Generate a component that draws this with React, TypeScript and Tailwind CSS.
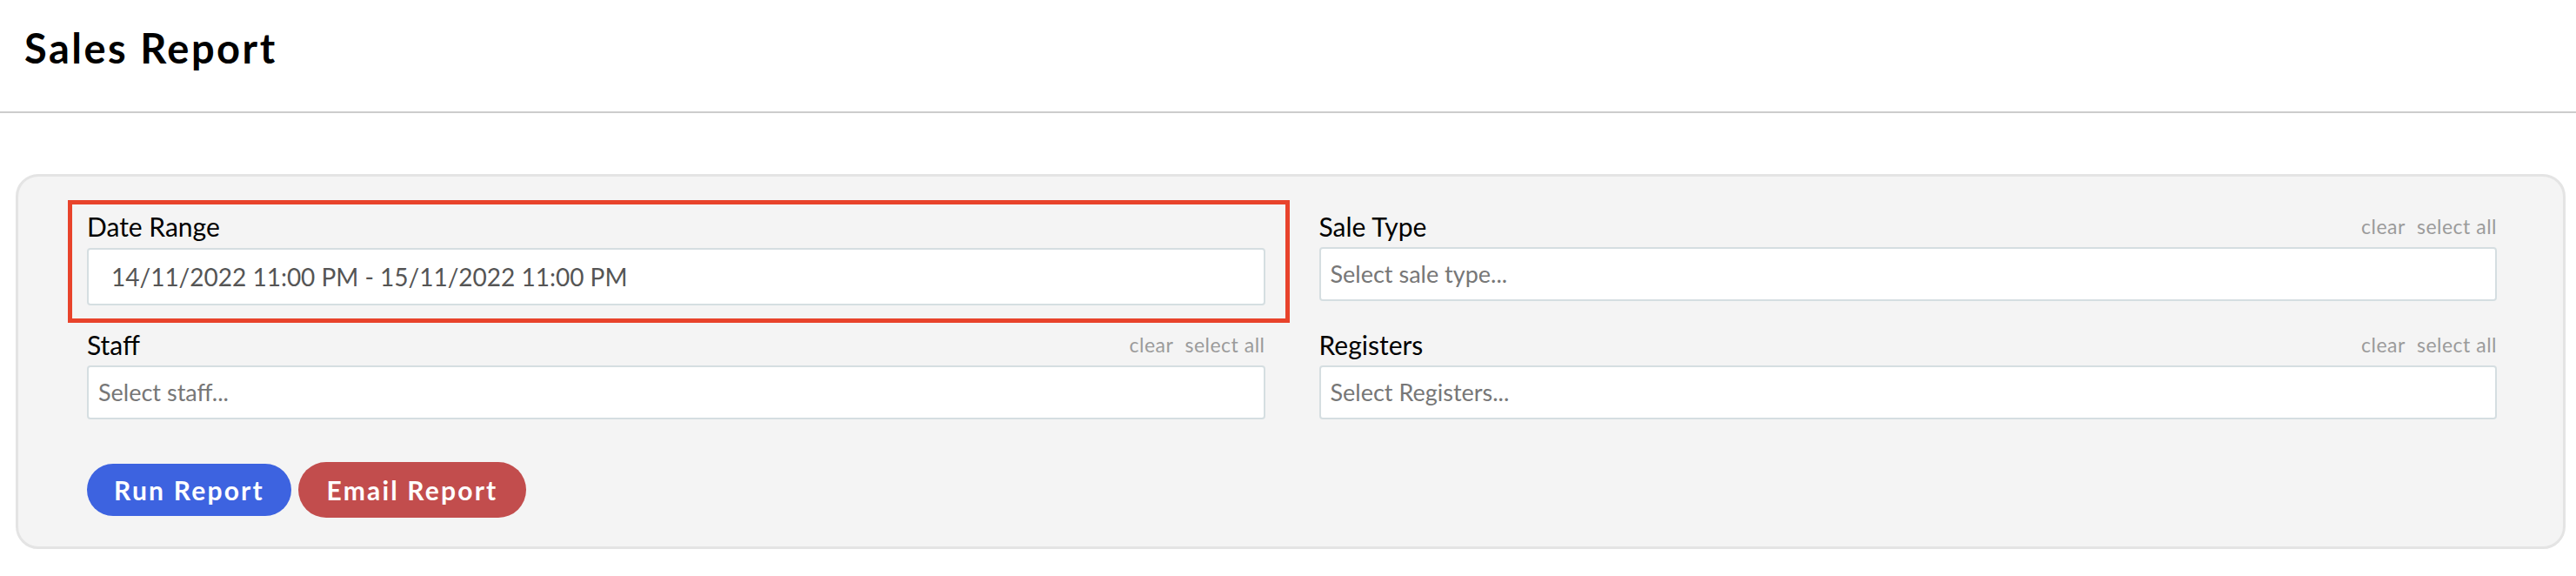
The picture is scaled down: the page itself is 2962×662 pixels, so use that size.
import React from 'react';

const font = { fontFamily: 'Lato, "Liberation Sans", sans-serif' };

const Links: React.FC = () => (
  <div className="flex items-baseline gap-[13px] text-[23px] leading-[36px] tracking-[0.5px] text-[#9b9b9b]">
    <span>clear</span>
    <span>select all</span>
  </div>
);

const Field: React.FC<{ label: string; placeholder: string; links?: boolean }> = ({ label, placeholder, links }) => (
  <div className="flex flex-col">
    <div className="flex items-end justify-between">
      <span className="text-[30px] leading-[36px] text-black">{label}</span>
      {links && <Links />}
    </div>
    <div className="mt-[6px] h-[62px] rounded-[4px] border-2 border-[#d5dee1] bg-white px-[11px] flex items-center">
      <span className="text-[27px] text-[#777777]">{placeholder}</span>
    </div>
  </div>
);

export default function App() {
  return (
    <div className="min-h-[662px] w-full bg-white" style={font}>
      <div className="h-[130px] border-b-2 border-[#cccccc] pl-[28px] pt-[27px]">
        <h1 className="text-[47px] font-bold leading-[56px] tracking-[2.5px] text-black">Sales Report</h1>
      </div>

      <div className="ml-[18px] mr-[12px] mt-[70px] rounded-[26px] border-[3px] border-[#e4e4e4] bg-[#f4f4f4] pl-[79px] pr-[76px] pt-[39px] pb-[33px]">
        <div className="grid grid-cols-2 gap-x-[62px] gap-y-[27px]">
          {/* date range, highlighted */}
          <div className="relative flex flex-col">
            <span className="text-[30px] leading-[36px] text-black">Date Range</span>
            <div className="mt-[7px] h-[66px] rounded-[4px] border-2 border-[#d5dee1] bg-white pl-[26px] flex items-center">
              <span className="text-[28px] text-[#555555]">14/11/2022 11:00 PM - 15/11/2022 11:00 PM</span>
            </div>
            <div className="pointer-events-none absolute -left-[22px] -right-[28px] -top-[12px] -bottom-[20px] border-[5px] border-[#e8432b]" />
          </div>

          <Field label="Sale Type" placeholder="Select sale type..." links />
          <Field label="Staff" placeholder="Select staff..." links />
          <Field label="Registers" placeholder="Select Registers..." links />
        </div>

        <div className="mt-[49px] flex items-center gap-[8px]">
          <button className="h-[60px] w-[235px] rounded-full bg-[#3d63e0] text-[30px] font-bold tracking-[2.2px] text-white flex items-center justify-center">
            Run Report
          </button>
          <button className="h-[64px] w-[262px] rounded-full bg-[#c24d4d] text-[30px] font-bold tracking-[2.2px] text-white flex items-center justify-center">
            Email Report
          </button>
        </div>
      </div>
    </div>
  );
}
